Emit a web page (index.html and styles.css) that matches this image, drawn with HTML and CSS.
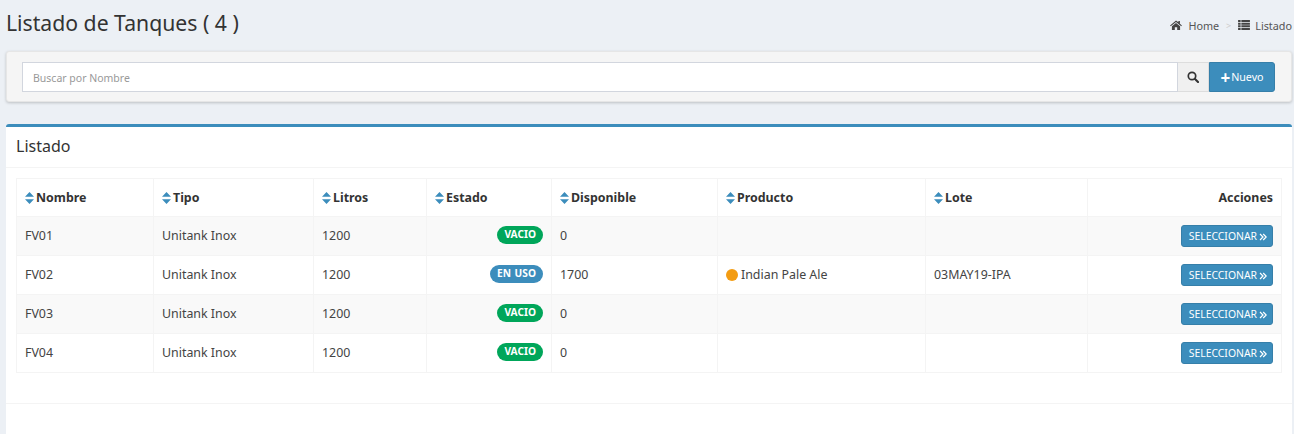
FILE: index.html
```html
<!DOCTYPE html>
<html lang="es">
<head>
<meta charset="utf-8">
<title>Listado de Tanques</title>
<link rel="stylesheet" href="styles.css">
</head>
<body>
<svg class="defs" width="0" height="0" aria-hidden="true">
  <symbol id="sort" viewBox="0 0 9 12"><path d="M4.5 0 9 4.8H0zM0 7.2h9L4.5 12z"/></symbol>
  <symbol id="dbl" viewBox="0 0 8 8"><path d="M1 1l3 3-3 3M4.2 1l3 3-3 3" fill="none" stroke="currentColor" stroke-width="1.2"/></symbol>
</svg>
<header class="page-head">
  <h1 class="page-title">Listado de Tanques ( 4 )</h1>
  <nav class="crumbs">
    <svg class="crumb-icon" viewBox="0 0 13 11"><path d="M6.5 0.6 0 6l.7.9L6.5 2.2l5.8 4.7.7-.9-2.2-1.8V1h-1.7v1.6zM2 7v4h3.2V8h2.6v3H11V7L6.5 3.3z"/></svg>
    <span class="crumb-text">Home</span>
    <span class="crumb-sep">&gt;</span>
    <svg class="crumb-icon list-icon" viewBox="0 0 13 11"><path d="M0 0h2.8v2.3H0zM3.6 0H13v2.3H3.6zM0 2.9h2.8v2.3H0zM3.6 2.9H13v2.3H3.6zM0 5.8h2.8v2.3H0zM3.6 5.8H13v2.3H3.6zM0 8.7h2.8V11H0zM3.6 8.7H13V11H3.6z"/></svg>
    <span class="crumb-text">Listado</span>
  </nav>
</header>
<section class="search-panel">
  <div class="search-input">Buscar por Nombre</div>
  <div class="search-btn">
    <svg class="search-icon" viewBox="0 0 12 12"><circle cx="5" cy="5" r="3.7" fill="none" stroke="currentColor" stroke-width="1.7"/><path d="M7.8 7.8 11 11" stroke="currentColor" stroke-width="2.1" stroke-linecap="round"/></svg>
  </div>
  <div class="new-btn"><span class="plus">+</span>Nuevo</div>
</section>
<section class="card">
  <h2 class="card-title">Listado</h2>
  <div class="card-body">
    <table class="grid">
      <colgroup>
        <col class="c1"><col class="c2"><col class="c3"><col class="c4"><col class="c5"><col class="c6"><col class="c7"><col class="c8">
      </colgroup>
      <thead>
        <tr>
          <th><svg class="sort"><use href="#sort"/></svg>Nombre</th>
          <th><svg class="sort"><use href="#sort"/></svg>Tipo</th>
          <th><svg class="sort"><use href="#sort"/></svg>Litros</th>
          <th><svg class="sort"><use href="#sort"/></svg>Estado</th>
          <th><svg class="sort"><use href="#sort"/></svg>Disponible</th>
          <th><svg class="sort"><use href="#sort"/></svg>Producto</th>
          <th><svg class="sort"><use href="#sort"/></svg>Lote</th>
          <th class="right">Acciones</th>
        </tr>
      </thead>
      <tbody>
        <tr>
          <td>FV01</td><td>Unitank Inox</td><td>1200</td>
          <td class="right"><span class="pill green">VACIO</span></td>
          <td>0</td><td></td><td></td>
          <td class="right"><span class="sel">SELECCIONAR<svg class="dbl"><use href="#dbl"/></svg></span></td>
        </tr>
        <tr>
          <td>FV02</td><td>Unitank Inox</td><td>1200</td>
          <td class="right"><span class="pill blue">EN USO</span></td>
          <td>1700</td><td><span class="dot"></span>Indian Pale Ale</td><td>03MAY19-IPA</td>
          <td class="right"><span class="sel">SELECCIONAR<svg class="dbl"><use href="#dbl"/></svg></span></td>
        </tr>
        <tr>
          <td>FV03</td><td>Unitank Inox</td><td>1200</td>
          <td class="right"><span class="pill green">VACIO</span></td>
          <td>0</td><td></td><td></td>
          <td class="right"><span class="sel">SELECCIONAR<svg class="dbl"><use href="#dbl"/></svg></span></td>
        </tr>
        <tr>
          <td>FV04</td><td>Unitank Inox</td><td>1200</td>
          <td class="right"><span class="pill green">VACIO</span></td>
          <td>0</td><td></td><td></td>
          <td class="right"><span class="sel">SELECCIONAR<svg class="dbl"><use href="#dbl"/></svg></span></td>
        </tr>
      </tbody>
    </table>
  </div>
  <div class="card-foot"></div>
</section>
</body>
</html>
```

FILE: styles.css
```css
* { box-sizing: border-box; }
html, body { height: 100%; }
body {
  margin: 0;
  height: 434px;
  overflow: hidden;
  background: #ecf0f5;
  color: #333;
  font-family: "Noto Sans", sans-serif;
  font-size: 12.4px;
}
.defs { position: absolute; }

.page-head {
  display: flex;
  justify-content: space-between;
  height: 51px;
  padding: 8px 2px 0 6px;
}
.page-title {
  margin: 0;
  font-size: 21.2px;
  font-weight: 400;
  line-height: 30px;
  color: #333;
}
.crumbs {
  display: flex;
  align-items: center;
  height: 14px;
  margin-top: 10px;
  font-size: 10.8px;
  color: #555;
}
.crumb-icon { width: 12px; height: 10px; fill: #444; margin-right: 6px; }
.list-icon { margin-right: 5px; }
.crumb-sep { margin: 0 7px; color: #ccc; font-size: 9px; }

.search-panel {
  display: flex;
  width: 1286px;
  height: 51px;
  margin-left: 6px;
  padding: 10px 16px 0 15px;
  background: #f5f5f5;
  border: 1px solid #e6e6e6;
  border-radius: 3px;
  box-shadow: 0 1px 3px rgba(0,0,0,.2);
}
.search-input {
  flex: 1;
  height: 30px;
  padding-left: 10px;
  background: #fff;
  border: 1px solid #d2d6de;
  color: #999;
  font-size: 10.5px;
  line-height: 30px;
}
.search-btn {
  display: flex;
  align-items: center;
  justify-content: center;
  width: 31px;
  height: 30px;
  background: #f0f0f0;
  border: 1px solid #ddd;
  border-left: 0;
  color: #333;
}
.search-icon { width: 12px; height: 12px; }
.new-btn {
  display: flex;
  align-items: center;
  justify-content: center;
  width: 66px;
  height: 30px;
  background: #3c8dbc;
  border: 1px solid #367fa9;
  border-radius: 0 3px 3px 0;
  color: #fff;
  font-size: 10.7px;
}
.plus { font-size: 17px; font-weight: 700; line-height: 1; margin-right: 1px; }

.card {
  width: 1286px;
  height: 320px;
  margin: 22px 0 0 6px;
  background: #fff;
  border-top: 3px solid #3c8dbc;
  border-radius: 3px 3px 0 0;
}
.card-title {
  margin: 0;
  height: 41px;
  padding-left: 10px;
  font-size: 16px;
  font-weight: 400;
  line-height: 39px;
  border-bottom: 1px solid #f4f4f4;
}
.card-body { padding: 10px 10px 30px; }
.grid {
  width: 1265px;
  table-layout: fixed;
  border-collapse: collapse;
  border: 1px solid #f4f4f4;
}
.c1 { width: 137px; }
.c2 { width: 160px; }
.c3 { width: 113px; }
.c4 { width: 125px; }
.c5 { width: 166px; }
.c6 { width: 208px; }
.c7 { width: 162px; }
.c8 { width: 194px; }
.grid th, .grid td {
  border: 1px solid #f4f4f4;
  padding: 0 8px;
  text-align: left;
  white-space: nowrap;
}
.grid th {
  height: 38px;
  font-weight: 700;
  font-size: 12.4px;
}
.grid td { height: 39px; padding-bottom: 2px; color: #444; }
.grid td.right { padding-bottom: 0; }
.grid .right { text-align: right; }
.grid tbody tr:nth-child(odd) { background: #f9f9f9; }
.sort { width: 9px; height: 12px; fill: #3c8dbc; margin-right: 2px; vertical-align: -2px; }
.pill {
  display: inline-block;
  position: relative;
  top: -2px;
  height: 18px;
  padding: 0 7px;
  border-radius: 9px;
  color: #fff;
  font-size: 10.2px;
  font-weight: 700;
  line-height: 17px;
  word-spacing: 1px;
}
.green { background: #00a65a; }
.blue { background: #3c8dbc; }
.dot {
  display: inline-block;
  width: 12px;
  height: 12px;
  margin-right: 3px;
  border-radius: 50%;
  background: #f39c12;
  vertical-align: -2px;
}
.sel {
  display: inline-block;
  height: 22px;
  padding: 0 5px 0 6.5px;
  background: #3c8dbc;
  border: 1px solid #367fa9;
  border-radius: 3px;
  color: #fff;
  font-size: 10.4px;
  line-height: 20px;
}
.dbl { width: 8px; height: 8px; margin-left: 2px; vertical-align: -0.5px; }
.card-foot { border-top: 1px solid #f4f4f4; }
```
